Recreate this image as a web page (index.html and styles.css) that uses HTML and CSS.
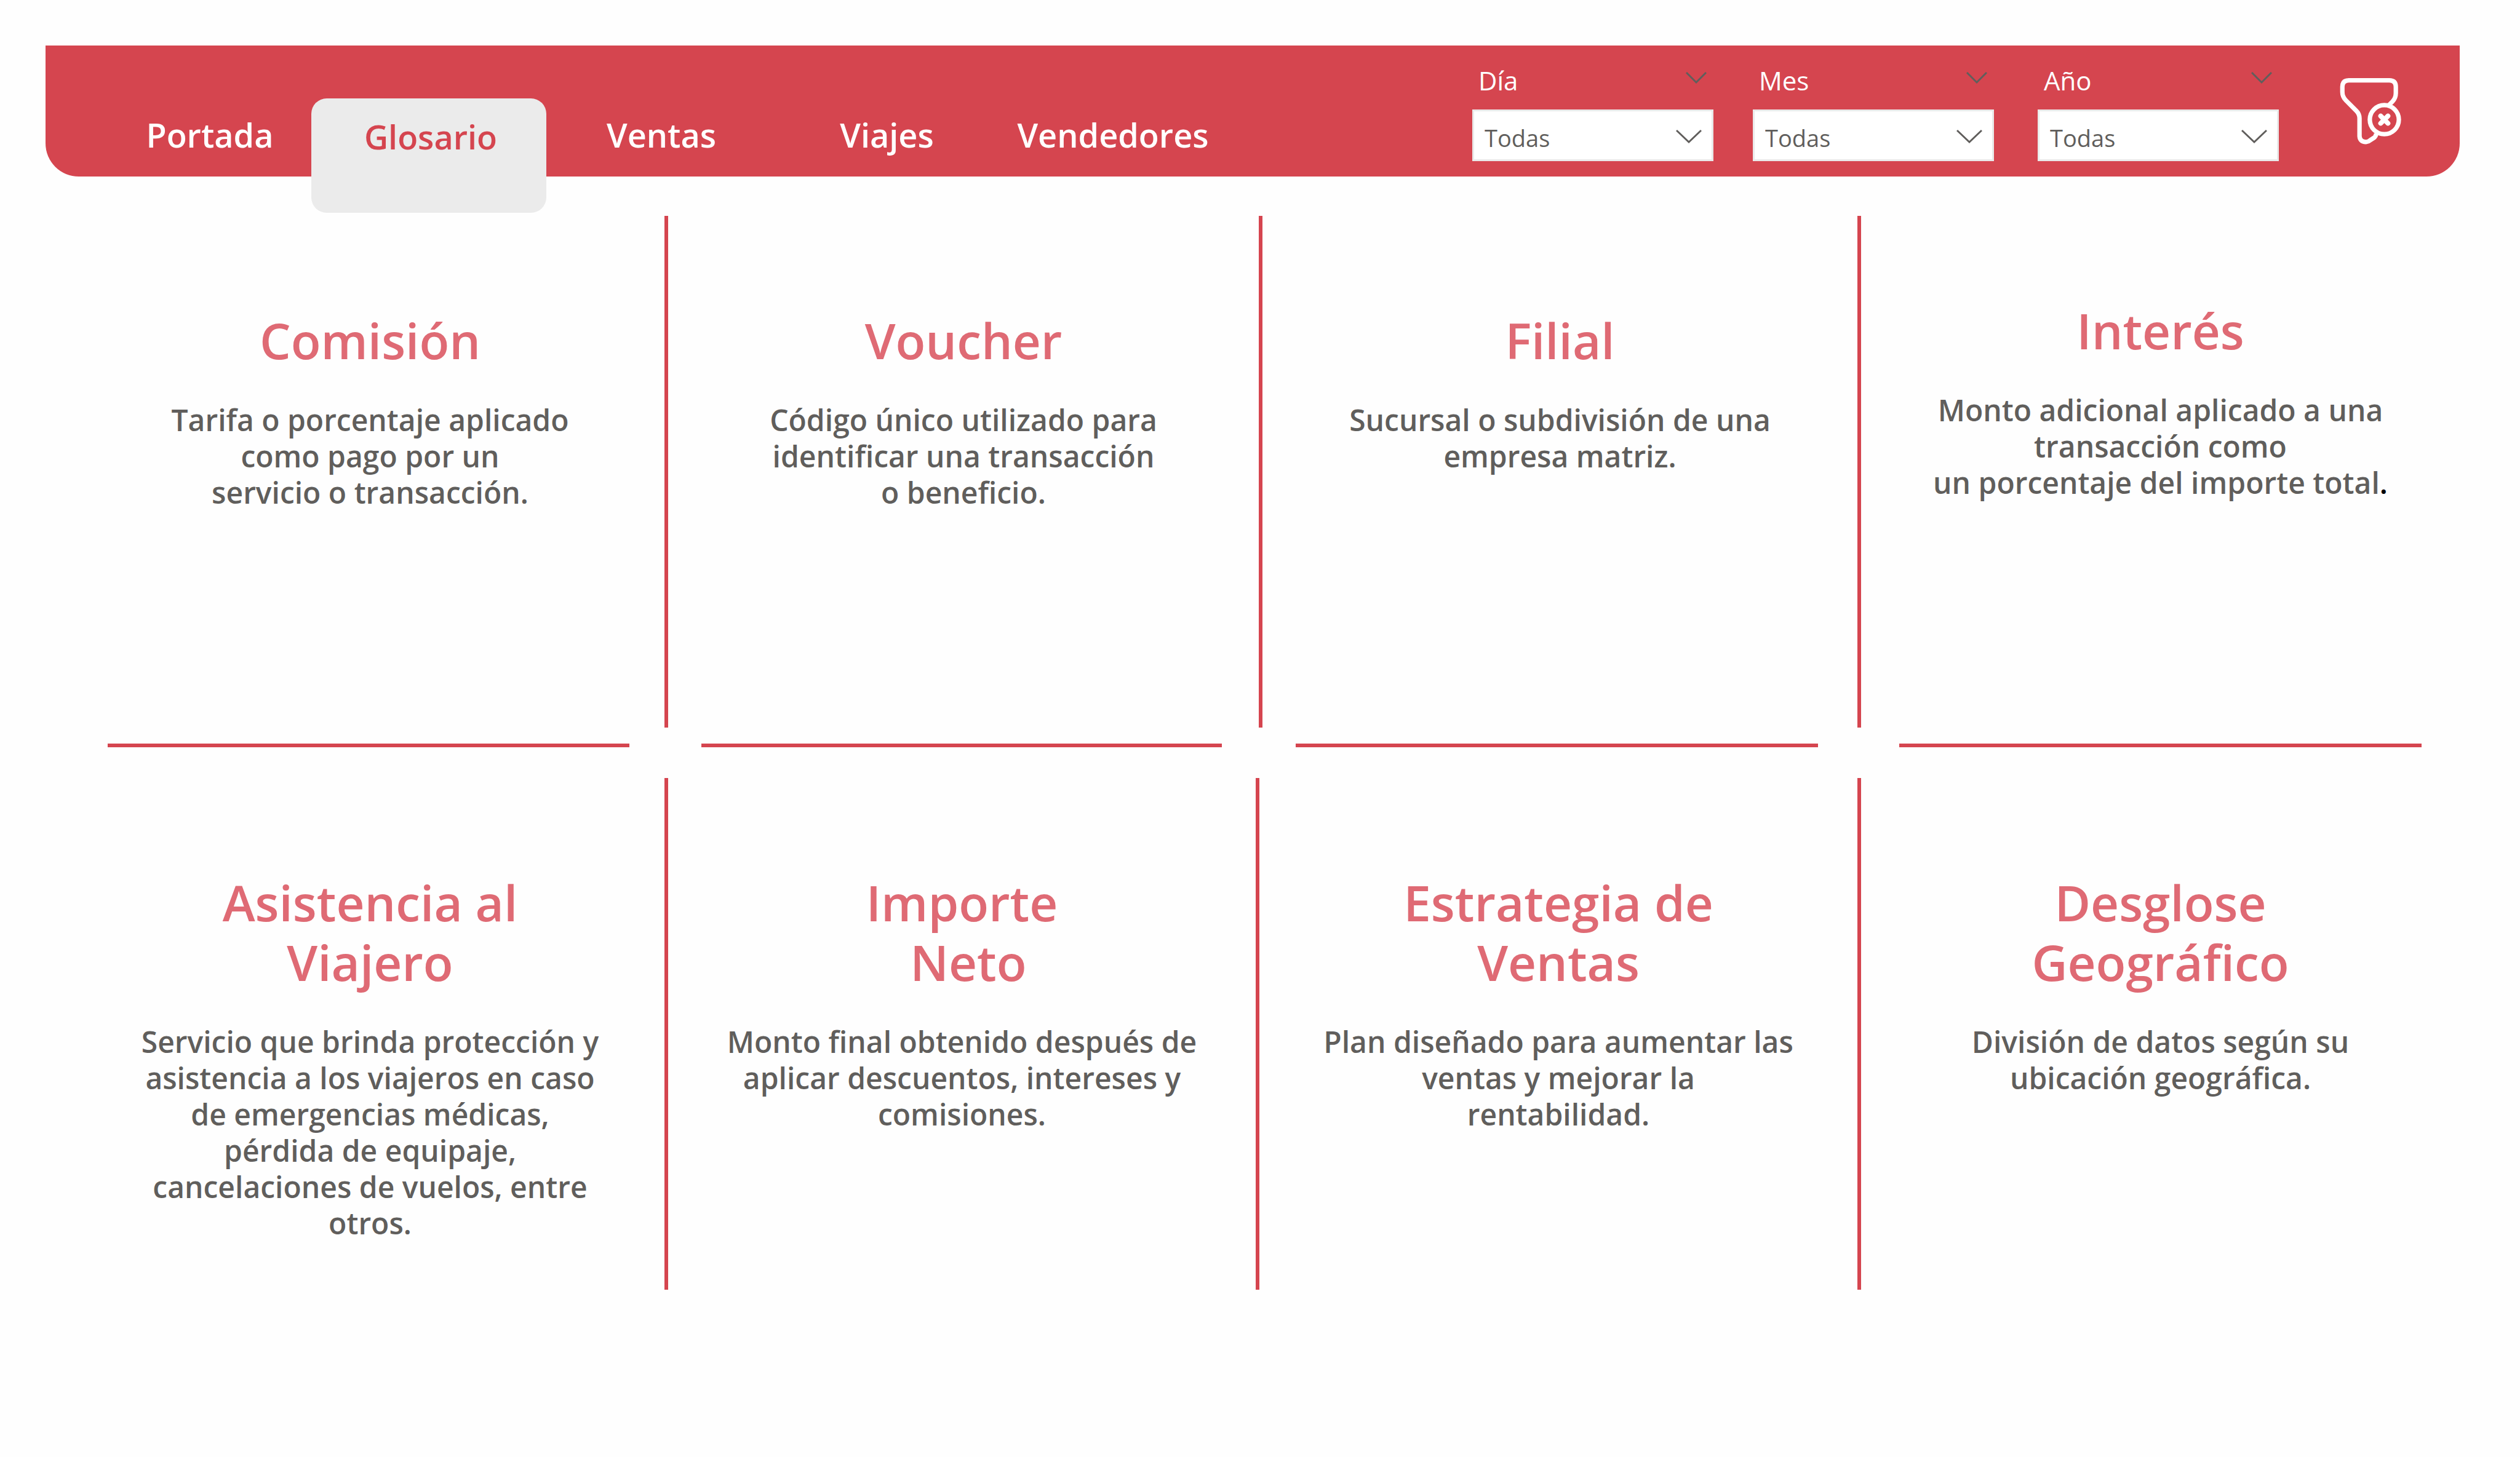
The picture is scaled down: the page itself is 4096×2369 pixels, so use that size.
FILE: index.html
```html
<!DOCTYPE html>
<html lang="es">
<head>
<meta charset="utf-8">
<title>Glosario</title>
<link rel="stylesheet" href="styles.css">
</head>
<body>
<header class="topbar">
  <nav class="tabs" aria-label="Páginas">
    <a class="tab" href="#portada">Portada</a>
    <a class="tab tab-active" href="#glosario" aria-current="page">Glosario</a>
    <a class="tab" href="#ventas">Ventas</a>
    <a class="tab" href="#viajes">Viajes</a>
    <a class="tab" href="#vendedores">Vendedores</a>
  </nav>
  <form class="filters">
    <div class="filter">
      <div class="filter-head">
        <label for="dia">Día</label>
        <svg class="chevron-small" viewBox="0 0 34 20" aria-hidden="true"><path d="M1 1 17 17 33 1"/></svg>
      </div>
      <div class="filter-box">
        <select id="dia"><option>Todas</option></select>
        <svg class="chevron" viewBox="0 0 42 24" aria-hidden="true"><path d="M1 2 21 21 41 2"/></svg>
      </div>
    </div>
    <div class="filter">
      <div class="filter-head">
        <label for="mes">Mes</label>
        <svg class="chevron-small" viewBox="0 0 34 20" aria-hidden="true"><path d="M1 1 17 17 33 1"/></svg>
      </div>
      <div class="filter-box">
        <select id="mes"><option>Todas</option></select>
        <svg class="chevron" viewBox="0 0 42 24" aria-hidden="true"><path d="M1 2 21 21 41 2"/></svg>
      </div>
    </div>
    <div class="filter">
      <div class="filter-head">
        <label for="anio">Año</label>
        <svg class="chevron-small" viewBox="0 0 34 20" aria-hidden="true"><path d="M1 1 17 17 33 1"/></svg>
      </div>
      <div class="filter-box">
        <select id="anio"><option>Todas</option></select>
        <svg class="chevron" viewBox="0 0 42 24" aria-hidden="true"><path d="M1 2 21 21 41 2"/></svg>
      </div>
    </div>
  </form>
  <button class="clear" type="button" aria-label="Borrar filtros">
    <svg viewBox="160 112 308 334" aria-hidden="true">
      <path d="M404 249 L421 232 Q438 214 438 190 V158 Q438 126 406 126 H205 Q173 126 173 158 V184 Q173 208 190 225 L242 277 Q258 293 258 314 V403 Q260 430 290 432 Q302 431 311 423 L328 412 Q339 405 341 390"/>
      <circle cx="381" cy="321" r="72"/>
      <path class="clear-cross" d="M363 303 399 339M399 303 363 339"/>
    </svg>
  </button>
</header>
<main class="glossary">
  <section class="terms terms-top">
    <article class="term">
      <h2>Comisión</h2>
      <p>Tarifa o porcentaje aplicado<br>como pago por un<br>servicio o transacción.</p>
    </article>
    <div class="rule-v"></div>
    <article class="term">
      <h2>Voucher</h2>
      <p>Código único utilizado para<br>identificar una transacción<br>o beneficio.</p>
    </article>
    <div class="rule-v"></div>
    <article class="term">
      <h2>Filial</h2>
      <p>Sucursal o subdivisión de una<br>empresa matriz.</p>
    </article>
    <div class="rule-v"></div>
    <article class="term term-raised">
      <h2>Interés</h2>
      <p>Monto adicional aplicado a una<br>transacción como<br>un porcentaje del importe total<span class="stop">.</span></p>
    </article>
  </section>

  <div class="rules">
    <hr><hr><hr><hr>
  </div>

  <section class="terms terms-bottom">
    <article class="term">
      <h2>Asistencia al<br>Viajero</h2>
      <p>Servicio que brinda protección y<br>asistencia a los viajeros en caso<br>de emergencias médicas,<br>pérdida de equipaje,<br>cancelaciones de vuelos, entre<br>otros.</p>
    </article>
    <div class="rule-v"></div>
    <article class="term">
      <h2>Importe<br>&nbsp;Neto</h2>
      <p>Monto final obtenido después de<br>aplicar descuentos, intereses y<br>comisiones.</p>
    </article>
    <div class="rule-v"></div>
    <article class="term">
      <h2>Estrategia de<br>Ventas</h2>
      <p>Plan diseñado para aumentar las<br>ventas y mejorar la<br>rentabilidad.</p>
    </article>
    <div class="rule-v"></div>
    <article class="term">
      <h2>Desglose<br>Geográfico</h2>
      <p>División de datos según su<br>ubicación geográfica.</p>
    </article>
  </section>
</main>
</body>
</html>
```
FILE: styles.css
```css
:root {
  --red: #d5454f;
  --rose: #df6a74;
  --ink: #605e5c;
  --paper: #fefefe;
}

* { box-sizing: border-box; }

body {
  margin: 0;
  padding: 74px 0 0;
  background: var(--paper);
  color: var(--ink);
  font-family: "Open Sans", "Noto Sans", sans-serif;
}

/* Top bar */
.topbar {
  display: grid;
  grid-template-columns: 102fr 2217fr 1410fr 101fr 94fr;
  height: 213px;
  margin: 0 98px 0 74px;
  background: var(--red);
  border-radius: 0 0 54px 54px;
}

.tabs {
  grid-column: 2;
  display: grid;
  grid-template-columns: 330fr 382fr 374fr 359fr 376fr 396fr;
  height: 272px;
  padding-top: 86px;
}

.tab {
  padding-top: 24px;
  color: #fff;
  font-size: 54px;
  font-weight: 600;
  line-height: 70px;
  text-align: center;
  text-decoration: none;
}

.tab-active {
  padding-top: 27px;
  padding-left: 6px;
  background: #ebebeb;
  border-radius: 25px;
  color: var(--red);
}

/* Filters */
.filters {
  display: grid;
  grid-template-columns: 392fr 64fr 392fr 71fr 392fr 99fr;
  padding-top: 24px;
}

.filter:nth-child(1) { grid-column: 1; }
.filter:nth-child(2) { grid-column: 3; }
.filter:nth-child(3) { grid-column: 5; }

.filter-head {
  display: flex;
  justify-content: space-between;
  height: 80px;
  padding: 7px 11px 0 10px;
  color: #fff;
  font-size: 42px;
  font-weight: 500;
  line-height: 52px;
}

.chevron-small {
  width: 34px;
  height: 20px;
  margin-top: 12px;
}

.filter-box {
  display: grid;
  align-items: center;
}

.filter-box > * { grid-area: 1 / 1; }

.filter-box select {
  appearance: none;
  width: 100%;
  height: 84px;
  padding: 8px 17px 0;
  background: #fff;
  border: 3px solid #eaeaea;
  border-radius: 0;
  color: var(--ink);
  font: 400 38px/52px "Open Sans", "Noto Sans", sans-serif;
}

.chevron {
  justify-self: end;
  width: 42px;
  height: 24px;
  margin-top: 4px;
  margin-right: 19px;
  pointer-events: none;
}

.chevron path,
.chevron-small path {
  fill: none;
  stroke: var(--ink);
  stroke-width: 3;
}

/* Clear-filters button */
.clear {
  align-self: start;
  margin: 52px 0 0;
  padding: 0;
  background: none;
  border: 0;
}

.clear svg {
  display: block;
  width: 100%;
  fill: none;
  stroke: #fff;
  stroke-width: 22;
}

.clear .clear-cross {
  stroke-width: 24;
  stroke-linecap: round;
}

/* Glossary */
.glossary { padding-top: 64px; }

.terms {
  display: grid;
  min-height: 832px;
  margin: 0 98px 0 123px;
}

.terms-top { grid-template-columns: 957fr 6px 960fr 6px 967fr 6px 973fr; }

.terms-bottom { grid-template-columns: 957fr 6px 955fr 6px 972fr 6px 973fr; }

.term {
  padding-top: 153px;
  text-align: center;
}

.term-raised { padding-top: 137px; }

.term h2 {
  margin: 0 0 52px;
  color: var(--rose);
  font-size: 80px;
  font-weight: 600;
  line-height: 97px;
}

.term p {
  margin: 0;
  font-size: 48px;
  font-weight: 600;
  line-height: 59px;
}

.stop { color: #000; }

.rule-v { background: var(--red); }

/* Horizontal rules between the two rows of terms */
.rules {
  display: grid;
  grid-template-columns: 848fr 117fr 846fr 119fr 849fr 132fr 849fr;
  height: 82px;
  margin: 0 160px 0 175px;
  padding-top: 26px;
}

.rules hr {
  width: 100%;
  height: 6px;
  margin: 0;
  background: var(--red);
  border: 0;
}

.rules hr:nth-child(1) { grid-column: 1; }
.rules hr:nth-child(2) { grid-column: 3; }
.rules hr:nth-child(3) { grid-column: 5; }
.rules hr:nth-child(4) { grid-column: 7; }
```
